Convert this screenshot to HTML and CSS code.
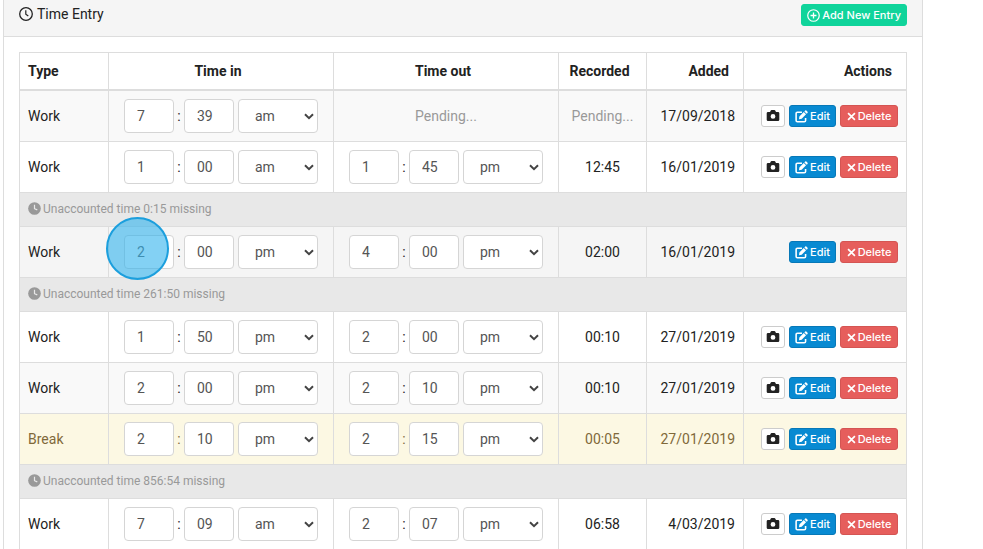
FILE: index.html
```
<!DOCTYPE html>
<html lang="en">
	<head>
		<meta charset="UTF-8" />
		<meta name="viewport" content="width=device-width, initial-scale=1.0" />
		<title>Time Entry</title>
		<link rel="stylesheet" href="styles.css">
	</head>
	<body>
		<!-- icons -->
		<svg class="sprite" aria-hidden="true">
			<symbol id="i-clock" viewBox="0 0 14 14">
				<circle cx="7" cy="7" r="6.3" fill="none" stroke="currentColor" stroke-width="1.3" />
				<path d="M6.8 3.2v4l2.5 1.9" fill="none" stroke="currentColor" stroke-width="1.2" />
			</symbol>
			<symbol id="i-clock-solid" viewBox="0 0 14 14">
				<circle cx="7" cy="7" r="6.8" fill="currentColor" />
				<path d="M7 3v4.2l3 1.3" fill="none" stroke="#e8e8e8" stroke-width="1.3" />
			</symbol>
			<symbol id="i-plus" viewBox="0 0 14 14">
				<circle cx="7" cy="7" r="6.2" fill="none" stroke="currentColor" stroke-width="1.3" />
				<path d="M7 3.8v6.4M3.8 7h6.4" stroke="currentColor" stroke-width="1.4" />
			</symbol>
			<symbol id="i-camera" viewBox="0 0 14 14">
				<path fill="currentColor" fill-rule="evenodd" d="M2 3h2l.8-1.6q.2-.4.7-.4h3q.5 0 .7.4L10 3h2q1.3 0 1.3 1.3v6.4Q13.3 12 12 12H2Q.7 12 .7 10.7V4.3Q.7 3 2 3zM7 5a2.400 2.400 0 1 0 0 4.800A2.400 2.400 0 0 0 7 5z" />
			</symbol>
			<symbol id="i-edit" viewBox="0 0 14 14">
				<path d="M7.500 2.500H2.600Q1.200 2.500 1.200 3.900v7.400q0 1.400 1.400 1.400h7.400q1.400 0 1.400-1.400V8.500" fill="none" stroke="currentColor" stroke-width="1.700" />
				<path d="M4.300 9.900l.4-3 4.700-4.700 2.500 2.500-4.700 4.700zM10.100 1.500l.9-.9q.6-.5 1.200 0l1.300 1.300q.5.600 0 1.200l-.9.9z" fill="currentColor" />
			</symbol>
			<symbol id="i-x" viewBox="0 0 10 10">
				<path d="M1.200 1.200l7.600 7.600M8.800 1.200L1.200 8.800" stroke="currentColor" stroke-width="1.900" />
			</symbol>
		</svg>

		<div class="panel">
			<div class="panel-heading">
				<span class="panel-title"><svg class="icon-lg"><use href="#i-clock" /></svg> Time Entry</span>
				<button type="button" class="btn btn-add"><svg class="icon"><use href="#i-plus" /></svg>Add New Entry</button>
			</div>
			<div class="panel-body">
				<table class="entries">
					<colgroup>
						<col class="col-type" />
						<col class="col-time" />
						<col class="col-time" />
						<col class="col-recorded" />
						<col class="col-added" />
						<col />
					</colgroup>
					<thead>
						<tr>
							<th>Type</th>
							<th class="center">Time in</th>
							<th class="center">Time out</th>
							<th class="center">Recorded</th>
							<th class="right">Added</th>
							<th class="right">Actions</th>
						</tr>
					</thead>
					<tbody>
						<tr>
							<td>Work</td>
							<td>
								<div class="time">
									<input type="text" aria-label="Hour in" value="7" /><span>:</span><input type="text" aria-label="Minute in" value="39" />
									<select aria-label="am or pm in"><option selected>am</option><option>pm</option></select>
								</div>
							</td>
							<td class="center muted">Pending...</td>
							<td class="center muted">Pending...</td>
							<td class="right">17/09/2018</td>
							<td>
								<div class="actions">
									<button type="button" class="btn btn-photo" aria-label="Photo"><svg class="icon-lg"><use href="#i-camera" /></svg></button>
									<button type="button" class="btn btn-edit"><svg class="icon"><use href="#i-edit" /></svg>Edit</button>
									<button type="button" class="btn btn-delete"><svg class="icon-sm"><use href="#i-x" /></svg>Delete</button>
								</div>
							</td>
						</tr>
						<tr>
							<td>Work</td>
							<td>
								<div class="time">
									<input type="text" aria-label="Hour in" value="1" /><span>:</span><input type="text" aria-label="Minute in" value="00" />
									<select aria-label="am or pm in"><option selected>am</option><option>pm</option></select>
								</div>
							</td>
							<td>
								<div class="time">
									<input type="text" aria-label="Hour out" value="1" /><span>:</span><input type="text" aria-label="Minute out" value="45" />
									<select aria-label="am or pm out"><option>am</option><option selected>pm</option></select>
								</div>
							</td>
							<td class="center">12:45</td>
							<td class="right">16/01/2019</td>
							<td>
								<div class="actions">
									<button type="button" class="btn btn-photo" aria-label="Photo"><svg class="icon-lg"><use href="#i-camera" /></svg></button>
									<button type="button" class="btn btn-edit"><svg class="icon"><use href="#i-edit" /></svg>Edit</button>
									<button type="button" class="btn btn-delete"><svg class="icon-sm"><use href="#i-x" /></svg>Delete</button>
								</div>
							</td>
						</tr>
						<tr class="missing">
							<td colspan="6"><svg class="icon"><use href="#i-clock-solid" /></svg>Unaccounted time 0:15 missing</td>
						</tr>
						<tr class="active">
							<td>Work</td>
							<td class="marked">
								<div class="time">
									<input type="text" aria-label="Hour in" value="2" /><span>:</span><input type="text" aria-label="Minute in" value="00" />
									<select aria-label="am or pm in"><option>am</option><option selected>pm</option></select>
								</div>
								<div class="marker"></div>
							</td>
							<td>
								<div class="time">
									<input type="text" aria-label="Hour out" value="4" /><span>:</span><input type="text" aria-label="Minute out" value="00" />
									<select aria-label="am or pm out"><option>am</option><option selected>pm</option></select>
								</div>
							</td>
							<td class="center">02:00</td>
							<td class="right">16/01/2019</td>
							<td>
								<div class="actions">
									<button type="button" class="btn btn-edit"><svg class="icon"><use href="#i-edit" /></svg>Edit</button>
									<button type="button" class="btn btn-delete"><svg class="icon-sm"><use href="#i-x" /></svg>Delete</button>
								</div>
							</td>
						</tr>
						<tr class="missing">
							<td colspan="6"><svg class="icon"><use href="#i-clock-solid" /></svg>Unaccounted time 261:50 missing</td>
						</tr>
						<tr>
							<td>Work</td>
							<td>
								<div class="time">
									<input type="text" aria-label="Hour in" value="1" /><span>:</span><input type="text" aria-label="Minute in" value="50" />
									<select aria-label="am or pm in"><option>am</option><option selected>pm</option></select>
								</div>
							</td>
							<td>
								<div class="time">
									<input type="text" aria-label="Hour out" value="2" /><span>:</span><input type="text" aria-label="Minute out" value="00" />
									<select aria-label="am or pm out"><option>am</option><option selected>pm</option></select>
								</div>
							</td>
							<td class="center">00:10</td>
							<td class="right">27/01/2019</td>
							<td>
								<div class="actions">
									<button type="button" class="btn btn-photo" aria-label="Photo"><svg class="icon-lg"><use href="#i-camera" /></svg></button>
									<button type="button" class="btn btn-edit"><svg class="icon"><use href="#i-edit" /></svg>Edit</button>
									<button type="button" class="btn btn-delete"><svg class="icon-sm"><use href="#i-x" /></svg>Delete</button>
								</div>
							</td>
						</tr>
						<tr>
							<td>Work</td>
							<td>
								<div class="time">
									<input type="text" aria-label="Hour in" value="2" /><span>:</span><input type="text" aria-label="Minute in" value="00" />
									<select aria-label="am or pm in"><option>am</option><option selected>pm</option></select>
								</div>
							</td>
							<td>
								<div class="time">
									<input type="text" aria-label="Hour out" value="2" /><span>:</span><input type="text" aria-label="Minute out" value="10" />
									<select aria-label="am or pm out"><option>am</option><option selected>pm</option></select>
								</div>
							</td>
							<td class="center">00:10</td>
							<td class="right">27/01/2019</td>
							<td>
								<div class="actions">
									<button type="button" class="btn btn-photo" aria-label="Photo"><svg class="icon-lg"><use href="#i-camera" /></svg></button>
									<button type="button" class="btn btn-edit"><svg class="icon"><use href="#i-edit" /></svg>Edit</button>
									<button type="button" class="btn btn-delete"><svg class="icon-sm"><use href="#i-x" /></svg>Delete</button>
								</div>
							</td>
						</tr>
						<tr class="break">
							<td>Break</td>
							<td>
								<div class="time">
									<input type="text" aria-label="Hour in" value="2" /><span>:</span><input type="text" aria-label="Minute in" value="10" />
									<select aria-label="am or pm in"><option>am</option><option selected>pm</option></select>
								</div>
							</td>
							<td>
								<div class="time">
									<input type="text" aria-label="Hour out" value="2" /><span>:</span><input type="text" aria-label="Minute out" value="15" />
									<select aria-label="am or pm out"><option>am</option><option selected>pm</option></select>
								</div>
							</td>
							<td class="center">00:05</td>
							<td class="right">27/01/2019</td>
							<td>
								<div class="actions">
									<button type="button" class="btn btn-photo" aria-label="Photo"><svg class="icon-lg"><use href="#i-camera" /></svg></button>
									<button type="button" class="btn btn-edit"><svg class="icon"><use href="#i-edit" /></svg>Edit</button>
									<button type="button" class="btn btn-delete"><svg class="icon-sm"><use href="#i-x" /></svg>Delete</button>
								</div>
							</td>
						</tr>
						<tr class="missing">
							<td colspan="6"><svg class="icon"><use href="#i-clock-solid" /></svg>Unaccounted time 856:54 missing</td>
						</tr>
						<tr>
							<td>Work</td>
							<td>
								<div class="time">
									<input type="text" aria-label="Hour in" value="7" /><span>:</span><input type="text" aria-label="Minute in" value="09" />
									<select aria-label="am or pm in"><option selected>am</option><option>pm</option></select>
								</div>
							</td>
							<td>
								<div class="time">
									<input type="text" aria-label="Hour out" value="2" /><span>:</span><input type="text" aria-label="Minute out" value="07" />
									<select aria-label="am or pm out"><option>am</option><option selected>pm</option></select>
								</div>
							</td>
							<td class="center">06:58</td>
							<td class="right">4/03/2019</td>
							<td>
								<div class="actions">
									<button type="button" class="btn btn-photo" aria-label="Photo"><svg class="icon-lg"><use href="#i-camera" /></svg></button>
									<button type="button" class="btn btn-edit"><svg class="icon"><use href="#i-edit" /></svg>Edit</button>
									<button type="button" class="btn btn-delete"><svg class="icon-sm"><use href="#i-x" /></svg>Delete</button>
								</div>
							</td>
						</tr>
					</tbody>
				</table>
			</div>
		</div>
	</body>
</html>
```
FILE: styles.css
```
* {
	box-sizing: border-box;
}
html {
	scrollbar-width: none;
}
body {
	margin: 0;
	background: #fff;
	color: #222;
	font-family: Roboto, "Liberation Sans", sans-serif;
	font-size: 14px;
	line-height: 20px;
}
.sprite {
	display: none;
}
.icon {
	width: 13px;
	height: 13px;
}
.icon-lg {
	width: 14px;
	height: 14px;
}
.icon-sm {
	width: 9px;
	height: 9px;
}

.panel {
	margin: 0 60px 0 3px;
	border: 1px solid #ddd;
	border-width: 0 1px;
}
.panel-heading {
	display: flex;
	justify-content: space-between;
	align-items: flex-start;
	padding: 4px 15px 10px;
	background: #f5f5f5;
	border-bottom: 1px solid #ddd;
}
.panel-title {
	display: flex;
	align-items: center;
	gap: 4px;
}
.panel-body {
	padding: 15px;
}

.btn {
	display: flex;
	align-items: center;
	justify-content: center;
	gap: 2px;
	height: 22px;
	padding: 0 5px;
	border: 1px solid transparent;
	border-radius: 3px;
	color: #fff;
	font-family: Inter, "Liberation Sans", sans-serif;
	font-size: 11px;
	font-weight: 500;
	line-height: 18px;
	white-space: nowrap;
	cursor: pointer;
}
.btn-add {
	background: #10d49b;
	border-color: #10d49b;
}
.btn-photo {
	width: 24px;
	padding: 0;
	background: #fff;
	border-color: #ccc;
	color: #222;
}
.btn-edit {
	width: 47px;
	background: #088ad2;
	border-color: #0778b7;
}
.btn-delete {
	width: 58px;
	background: #e65e5c;
	border-color: #d45553;
}

.entries {
	width: 100%;
	table-layout: fixed;
	border-collapse: collapse;
}
.col-type {
	width: 89px;
}
.col-time {
	width: 225px;
}
.col-recorded {
	width: 88px;
}
.col-added {
	width: 97px;
}
.entries th,
.entries td {
	padding: 8px;
	border: 1px solid #ddd;
	text-align: left;
}
.entries th {
	padding-right: 14px;
	border-bottom-width: 2px;
	font-weight: 700;
}
.entries .center {
	text-align: center;
}
.entries .right {
	text-align: right;
}
.entries .muted {
	color: #999;
}
.entries tbody tr:nth-child(odd) {
	background: #f9f9f9;
}
.entries tbody tr.active {
	background: #f5f5f5;
}
.entries tbody tr.break {
	background: #fcf8e3;
	color: #80693a;
}
.entries tbody tr.missing {
	background: #e8e8e8;
	color: #999;
}
.entries .missing td {
	font-size: 12px;
	line-height: 17px;
}
.missing .icon {
	margin-right: 2px;
	vertical-align: -2px;
}

.time {
	display: flex;
	justify-content: center;
	align-items: center;
}
.time span {
	width: 10px;
	text-align: center;
}
.time input,
.time select {
	height: 34px;
	border: 1px solid #d5d5d5;
	border-radius: 4px;
	background: #fff;
	color: #555;
	font-family: inherit;
	font-size: 14px;
}
.time input {
	width: 50px;
	padding: 6px 12px;
}
.time select {
	width: 80px;
	margin-left: 4px;
	padding: 6px 16px;
	appearance: none;
	background: #fff url("data:image/svg+xml,%3Csvg xmlns='http://www.w3.org/2000/svg' width='10' height='7'%3E%3Cpath d='M1 1.200l4 4 4-4' fill='none' stroke='%23444' stroke-width='2'/%3E%3C/svg%3E") no-repeat right 3px center;
}
.actions {
	display: flex;
	justify-content: flex-end;
	gap: 4px;
}

/* click highlight over the hour field */
.marked {
	position: relative;
}
.marker {
	position: absolute;
	top: -10px;
	left: -3px;
	width: 63px;
	height: 63px;
	border: 2px solid #1c9fdd;
	border-radius: 50%;
	background: rgba(48, 178, 236, 0.6);
	pointer-events: none;
}
```
